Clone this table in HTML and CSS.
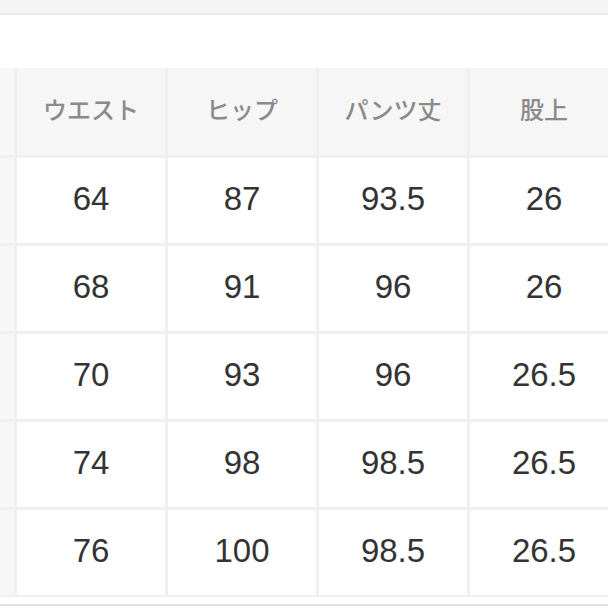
FILE: index.html
```html
<!DOCTYPE html>
<html lang="ja">
<head>
<meta charset="utf-8">
<title>サイズ表</title>
<link rel="stylesheet" href="styles.css">
</head>
<body>
<div class="topbar"></div>
<div class="spacer"></div>
<div class="table">
  <div class="cell side head"></div>
  <div class="cell head">ウエスト</div>
  <div class="cell head">ヒップ</div>
  <div class="cell head">パンツ丈</div>
  <div class="cell head">股上</div>

  <div class="cell side"></div>
  <div class="cell">64</div>
  <div class="cell">87</div>
  <div class="cell">93.5</div>
  <div class="cell">26</div>

  <div class="cell side"></div>
  <div class="cell">68</div>
  <div class="cell">91</div>
  <div class="cell">96</div>
  <div class="cell">26</div>

  <div class="cell side"></div>
  <div class="cell">70</div>
  <div class="cell">93</div>
  <div class="cell">96</div>
  <div class="cell">26.5</div>

  <div class="cell side"></div>
  <div class="cell">74</div>
  <div class="cell">98</div>
  <div class="cell">98.5</div>
  <div class="cell">26.5</div>

  <div class="cell side"></div>
  <div class="cell">76</div>
  <div class="cell">100</div>
  <div class="cell">98.5</div>
  <div class="cell">26.5</div>
</div>
<div class="bottom"></div>
</body>
</html>
```
FILE: styles.css
```css
html, body {
  margin: 0;
  padding: 0;
  background: #ffffff;
  width: 608px;
  height: 608px;
  overflow: hidden;
}
body {
  font-family: "Liberation Sans", Arial, "Noto Sans CJK JP", sans-serif;
}
.topbar {
  height: 13px;
  background: #f5f5f5;
  border-bottom: 2px solid #e9e9e9;
}
.spacer {
  height: 53px;
  background: #ffffff;
}
.table {
  display: grid;
  grid-template-columns: 14px repeat(4, 148px);
  grid-template-rows: 87px repeat(5, 85px);
  gap: 3px;
  background: #f0f0f0;
  border-bottom: 2px solid #f0f0f0;
  width: 608px;
  overflow: hidden;
}
.cell {
  background: #ffffff;
  display: flex;
  align-items: center;
  justify-content: center;
  padding-bottom: 4px;
  font-size: 33px;
  color: #333333;
  white-space: nowrap;
}
.cell.head {
  background: #f6f6f6;
  font-family: "Noto Sans CJK JP", sans-serif;
  font-size: 24px;
  font-weight: 500;
  color: #8a8a8a;
  padding-bottom: 6px;
}
.cell.side {
  background: #f7f7f7;
}
.bottom {
  height: 7px;
  background: #ffffff;
  border-bottom: 2px solid #e4e4e4;
}
```
